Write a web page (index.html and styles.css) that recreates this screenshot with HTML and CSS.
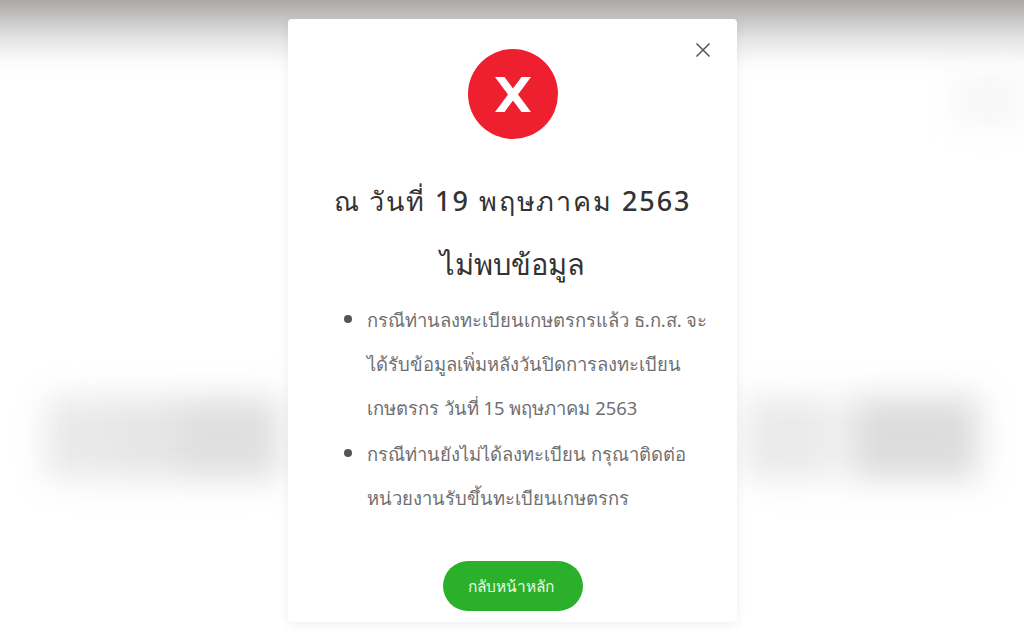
FILE: index.html
```html
<!DOCTYPE html>
<html lang="th">
<head>
    <meta charset="UTF-8">
    <meta name="viewport" content="width=device-width, initial-scale=1.0">
    <title>ไม่พบข้อมูล</title>
    <link rel="stylesheet" href="styles.css">
</head>
<body>
    <div class="backdrop">
        <div class="blur-row">
            <span class="blur-block block-a"></span>
            <span class="blur-block block-b"></span>
            <span class="blur-block block-c"></span>
            <span class="blur-gap"></span>
            <span class="blur-block block-d"></span>
            <span class="blur-block block-e"></span>
            <span class="blur-block block-f"></span>
        </div>
        <span class="blur-corner"></span>
    </div>

    <div class="modal">
        <button class="close" aria-label="ปิด">
            <svg viewBox="0 0 16 16" width="16" height="16">
                <path d="M1.5 1.5L14.5 14.5M14.5 1.5L1.5 14.5" stroke="#555" stroke-width="1.5" fill="none"></path>
            </svg>
        </button>
        <div class="status-icon">
            <svg viewBox="0 0 36 35" width="36" height="35">
                <path d="M0 0H9.5L18 11.5L26.5 0H36L23 17.5L36 35H26.5L18 23.5L9.5 35H0L13 17.5Z" fill="#fff"></path>
            </svg>
        </div>
        <h1>ณ วันที่ 19 พฤษภาคม 2563</h1>
        <h2>ไม่พบข้อมูล</h2>
        <ul class="notes">
            <li>กรณีท่านลงทะเบียนเกษตรกรแล้ว ธ.ก.ส. จะ<br>ได้รับข้อมูลเพิ่มหลังวันปิดการลงทะเบียน<br>เกษตรกร วันที่ 15 พฤษภาคม 2563</li>
            <li>กรณีท่านยังไม่ได้ลงทะเบียน กรุณาติดต่อ<br>หน่วยงานรับขึ้นทะเบียนเกษตรกร</li>
        </ul>
        <button class="home">กลับหน้าหลัก</button>
    </div>
</body>
</html>
```

FILE: styles.css
```css
html, body {
    height: 100%;
}
body {
    margin: 0;
    overflow: hidden;
    position: relative;
    font-family: 'Noto Sans', 'Liberation Sans', 'DejaVu Sans', sans-serif;
    background: linear-gradient(180deg, #aaa7a5 0, #c6c5c4 18px, #e6e6e6 40px, #fbfbfb 62px, #fff 76px);
    color: #333;
}
.backdrop {
    position: absolute;
    top: 0;
    left: 0;
    width: 100%;
    height: 100%;
}
.blur-row {
    position: absolute;
    top: 397px;
    left: 45px;
    right: 45px;
    height: 82px;
    display: flex;
    filter: blur(16px);
}
.blur-block {
    height: 100%;
    background: #e6e6e6;
}
.blur-gap {
    flex: 1;
}
.block-a { width: 70px; background: #e9e9e9; }
.block-b { width: 65px; background: #e6e6e6; }
.block-c { width: 100px; background: #dfdfdf; }
.block-d { width: 85px; background: #eaeaea; }
.block-e { width: 25px; background: #f3f3f3; }
.block-f { width: 125px; background: #dcdcdc; }
.blur-corner {
    position: absolute;
    top: 70px;
    right: 0;
    width: 70px;
    height: 60px;
    background: #f8f8f8;
    filter: blur(12px);
}
.modal {
    position: absolute;
    top: 19px;
    left: 288px;
    width: 449px;
    height: 603px;
    box-sizing: border-box;
    padding-top: 30px;
    background: #fff;
    border-radius: 4px;
    display: flex;
    flex-direction: column;
    align-items: center;
    box-shadow: 0 2px 12px rgba(0, 0, 0, 0.07);
}
.close {
    position: absolute;
    top: 23px;
    right: 26px;
    padding: 0;
    border: none;
    background: none;
    line-height: 0;
}
.status-icon {
    width: 90px;
    height: 90px;
    margin-left: 1px;
    border-radius: 50%;
    background: #ee2030;
    display: flex;
    justify-content: center;
    align-items: center;
}
h1 {
    margin: 44px 0 0;
    font-size: 27px;
    line-height: 36px;
    font-weight: 500;
    letter-spacing: 1.9px;
    color: #333;
}
h2 {
    margin: 26px 0 0;
    font-size: 29px;
    line-height: 38px;
    font-weight: 500;
    color: #333;
}
.notes {
    width: 100%;
    box-sizing: border-box;
    margin: 13px 0 0;
    padding: 0 0 0 79px;
    font-size: 18.4px;
    line-height: 44px;
    color: #6f6f6f;
}
.notes li::marker {
    color: #555;
    font-size: 22px;
}
.home {
    margin-top: 41px;
    width: 140px;
    height: 50px;
    padding: 0 3px 0 0;
    border: none;
    border-radius: 25px;
    background: #2bb02b;
    color: #e8f8e0;
    font-family: inherit;
    font-size: 15.5px;
}
```
